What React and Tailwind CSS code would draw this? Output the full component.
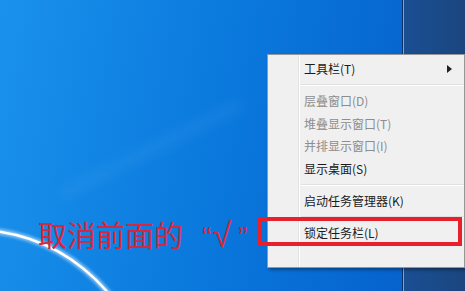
import React from 'react';

const FONT = { fontFamily: '"Noto Sans CJK SC", "Noto Sans", sans-serif' };
const LATIN = { fontFamily: '"Liberation Sans", "DejaVu Sans", sans-serif' };

const items = [
  { type: 'item', label: '工具栏(T)', arrow: true, h: 'h-[22px]' },
  { type: 'sep' },
  { type: 'item', label: '层叠窗口(D)', disabled: true, h: 'h-[22px]' },
  { type: 'item', label: '堆叠显示窗口(T)', disabled: true, h: 'h-[23px]' },
  { type: 'item', label: '并排显示窗口(I)', disabled: true, h: 'h-[22px]' },
  { type: 'item', label: '显示桌面(S)', h: 'h-[23px]' },
  { type: 'sep' },
  { type: 'item', label: '启动任务管理器(K)', h: 'h-[22px]' },
  { type: 'sep' },
  { type: 'item', label: '锁定任务栏(L)', h: 'h-[22px]' },
];

const ContextMenu = () => (
  <div
    className="absolute left-[267px] top-[54px] w-[198px] h-[214px] bg-[#f0f0f0] border border-[#979797] shadow-[2px_2px_3px_rgba(0,0,0,0.35)] pt-[3px] text-[12px] leading-none"
    style={FONT}
  >
    {/* icon gutter */}
    <div className="absolute left-[30px] top-0 bottom-0 w-[2px] border-l border-[#e2e3e3] border-r border-r-white" />
    {items.map((it, i) =>
      it.type === 'sep' ? (
        <div key={i} className="h-[10px] flex items-center pl-[33px]">
          <div className="w-full h-[2px] border-t border-[#e0e0e0] border-b border-b-white" />
        </div>
      ) : (
        <div key={i} className={`${it.h} flex items-center pl-[36px] pr-[12px] relative`}>
          <span className={it.disabled ? 'text-[#8d8d8d]' : 'text-[#1b1b1b]'}>{it.label}</span>
          {it.arrow && (
            <svg className="absolute right-[12px] top-[7px]" width="5" height="8" viewBox="0 0 5 8">
              <path d="M0 0 L5 4 L0 8 Z" fill="#222" />
            </svg>
          )}
        </div>
      )
    )}
  </div>
);

export default function App() {
  return (
    <div className="relative w-[465px] h-[291px] overflow-hidden flex">
      {/* desktop */}
      <div className="relative flex-1 h-full bg-[linear-gradient(100deg,#1a92ec_0%,#0a78dc_55%,#0662ce_100%)]">
        <svg className="absolute left-0 top-0" width="402" height="291" viewBox="0 0 402 291">
          <defs>
            <filter id="glow" x="-20%" y="-20%" width="140%" height="140%">
              <feGaussianBlur stdDeviation="1.6" />
            </filter>
            <filter id="soft" x="-20%" y="-50%" width="140%" height="200%">
              <feGaussianBlur stdDeviation="6" />
            </filter>
          </defs>
          <path d="M60 195 Q150 150 240 105" stroke="#4aa6f0" strokeWidth="10" fill="none" opacity="0.2" filter="url(#soft)" />
          <path d="M-5 231 Q64 240 110 295" stroke="#ffffff" strokeWidth="6" fill="none" opacity="0.5" filter="url(#glow)" />
          <path d="M-5 231 Q64 240 110 295" stroke="#ffffff" strokeWidth="2.5" fill="none" />
        </svg>
        <div
          className="absolute left-[38px] top-[218px] text-[29px] leading-none text-[#d8263c] whitespace-nowrap flex items-baseline"
          style={FONT}
        >
          <span>取消前面的</span>
          <span className="ml-[19px] w-[12px]" style={LATIN}>“</span>
          <span className="ml-[-3px] w-[22px] text-center text-[34px]" style={LATIN}>√</span>
          <span className="ml-[5px]" style={LATIN}>”</span>
        </div>
      </div>
      {/* taskbar */}
      <div className="w-[63px] h-full bg-[linear-gradient(90deg,#1a4f93,#1b467f)] border-l border-[#0d2f62] shadow-[inset_1px_0_0_#79a6d9]" />
      <ContextMenu />
      {/* highlight box */}
      <div className="absolute left-[258px] top-[217px] w-[204px] h-[29px] border-[4px] border-[#e8202c]" />
    </div>
  );
}
